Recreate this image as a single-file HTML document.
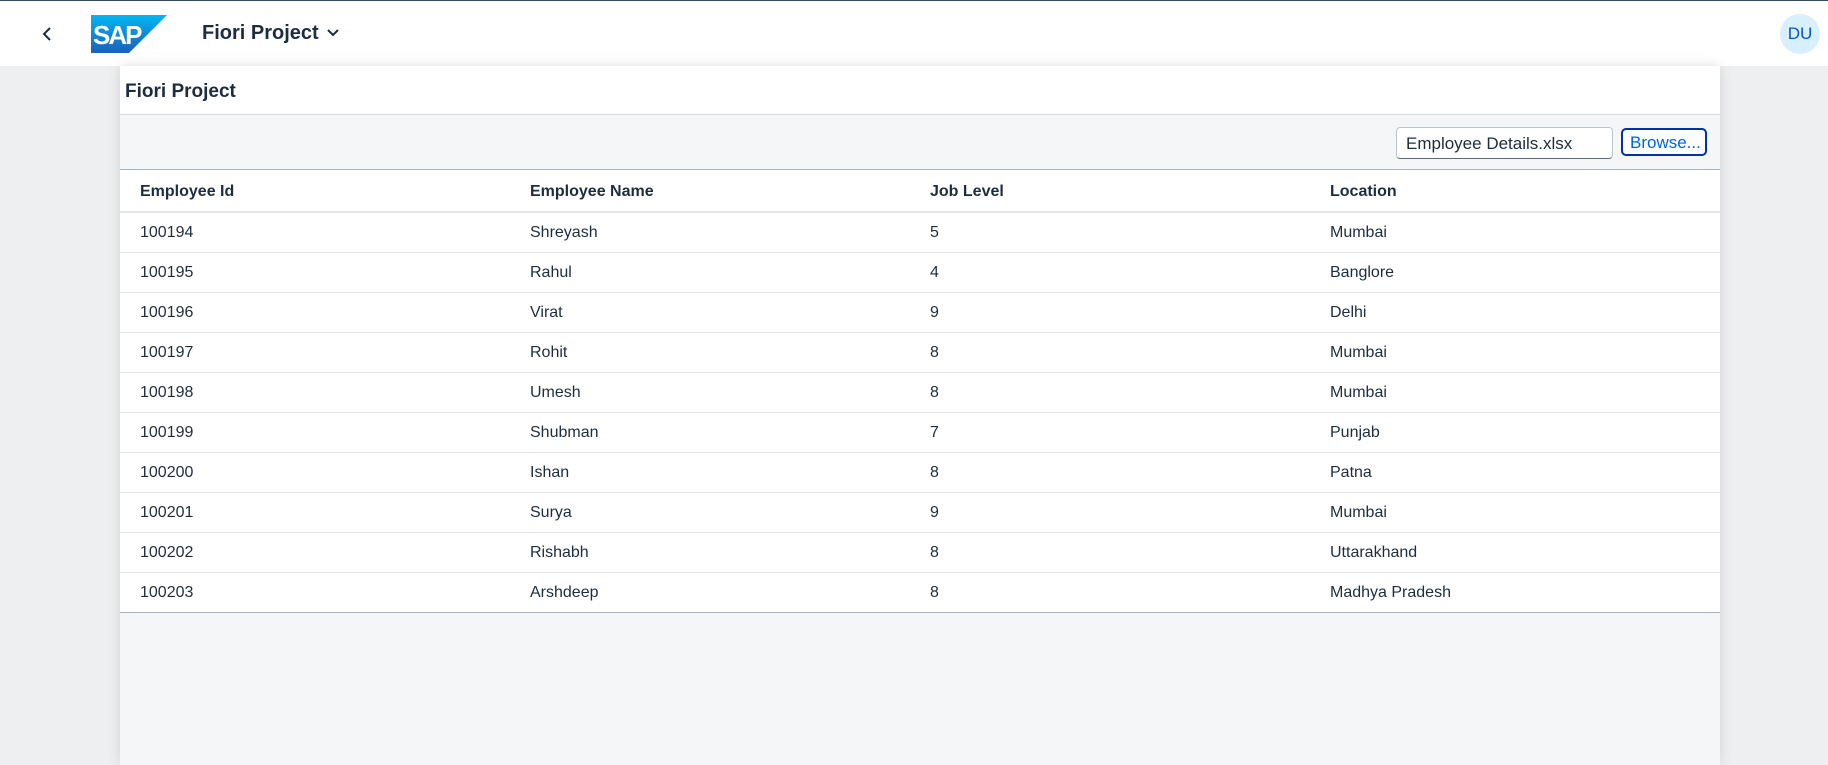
<!DOCTYPE html>
<html><head><style>
*{margin:0;padding:0;box-sizing:border-box}
body{width:1828px;height:765px;overflow:hidden;background:#edeff0;font-family:"Liberation Sans",sans-serif;color:#1d2d3e;position:relative}
.shell{position:absolute;left:0;top:0;width:1828px;height:66px;background:#fff;border-top:1px solid #354a5f}
.page{position:absolute;left:120px;top:66px;width:1600px;height:699px;background:#f5f6f7;box-shadow:0 0 12px rgba(0,0,0,0.12)}
.title{height:49px;background:#fff;border-bottom:1px solid #d9d9d9;font-size:19px;font-weight:bold;padding:15px 0 0 5px}
.tb{height:55px;position:relative;border-bottom:1px solid #a8b2bd}
.inp{position:absolute;left:1276px;top:12px;width:217px;height:32px;background:#fff;border:1px solid #bcc3ca;border-bottom-color:#556b82;border-radius:4px;font-size:17px;padding:6px 9px}
.btn{position:absolute;left:1501px;top:13px;width:86px;height:28px;border:2px solid #0032a5;border-radius:5px;color:#0064d9;font-size:17px;padding:3px 0 0 7px;background:#fff}
table{border-collapse:collapse;width:1600px;background:#fff;font-size:16px;table-layout:fixed}
td,th{text-align:left;padding:0 0 0 20px;height:40px;font-weight:normal}
th{height:42px;font-weight:bold;color:#1d2d3e;border-bottom:2px solid #e5e5e5;padding-top:2px}
td{border-bottom:1px solid #e5e5e5;padding-top:2px}
tr:last-child td{border-bottom:1px solid #a8b2bd}
</style></head><body>
<div class="shell">
<svg style="position:absolute;left:40px;top:24px" width="16" height="18" viewBox="0 0 16 18"><path d="M10 3 L4 9 L10 15" fill="none" stroke="#1d2d3e" stroke-width="2"/></svg>
<svg style="position:absolute;left:91px;top:14px" width="76" height="38" viewBox="0 0 76 38"><defs><linearGradient id="g" x1="0" y1="0" x2="0" y2="1"><stop offset="0" stop-color="#00b8f1"/><stop offset="1" stop-color="#1e5fbb"/></linearGradient></defs><polygon points="0,0 76,0 38,38 0,38" fill="url(#g)"/><text x="2" y="29" font-family="Liberation Sans" font-weight="bold" font-size="26" fill="#fff" letter-spacing="-2">SAP</text></svg>
<div style="position:absolute;left:202px;top:21px;font-size:20px;font-weight:bold">Fiori Project</div>
<svg style="position:absolute;left:326px;top:27px" width="14" height="10" viewBox="0 0 14 10"><path d="M2 2 L7 7 L12 2" fill="none" stroke="#1d2d3e" stroke-width="2"/></svg>
<div style="position:absolute;left:1780px;top:13px;width:40px;height:40px;border-radius:50%;background:#d8f0fd;color:#0057c2;font-size:17px;text-align:center;line-height:40px">DU</div>
</div>
<div class="page">
<div class="title">Fiori Project</div>
<div class="tb"><div class="inp">Employee Details.xlsx</div><div class="btn">Browse...</div></div>
<table><colgroup><col style="width:390px"><col style="width:400px"><col style="width:400px"><col style="width:410px"></colgroup>
<tr><th>Employee Id</th><th>Employee Name</th><th>Job Level</th><th>Location</th></tr>
<tr><td>100194</td><td>Shreyash</td><td>5</td><td>Mumbai</td></tr>
<tr><td>100195</td><td>Rahul</td><td>4</td><td>Banglore</td></tr>
<tr><td>100196</td><td>Virat</td><td>9</td><td>Delhi</td></tr>
<tr><td>100197</td><td>Rohit</td><td>8</td><td>Mumbai</td></tr>
<tr><td>100198</td><td>Umesh</td><td>8</td><td>Mumbai</td></tr>
<tr><td>100199</td><td>Shubman</td><td>7</td><td>Punjab</td></tr>
<tr><td>100200</td><td>Ishan</td><td>8</td><td>Patna</td></tr>
<tr><td>100201</td><td>Surya</td><td>9</td><td>Mumbai</td></tr>
<tr><td>100202</td><td>Rishabh</td><td>8</td><td>Uttarakhand</td></tr>
<tr><td>100203</td><td>Arshdeep</td><td>8</td><td>Madhya Pradesh</td></tr>
</table>
</div>
</body></html>
